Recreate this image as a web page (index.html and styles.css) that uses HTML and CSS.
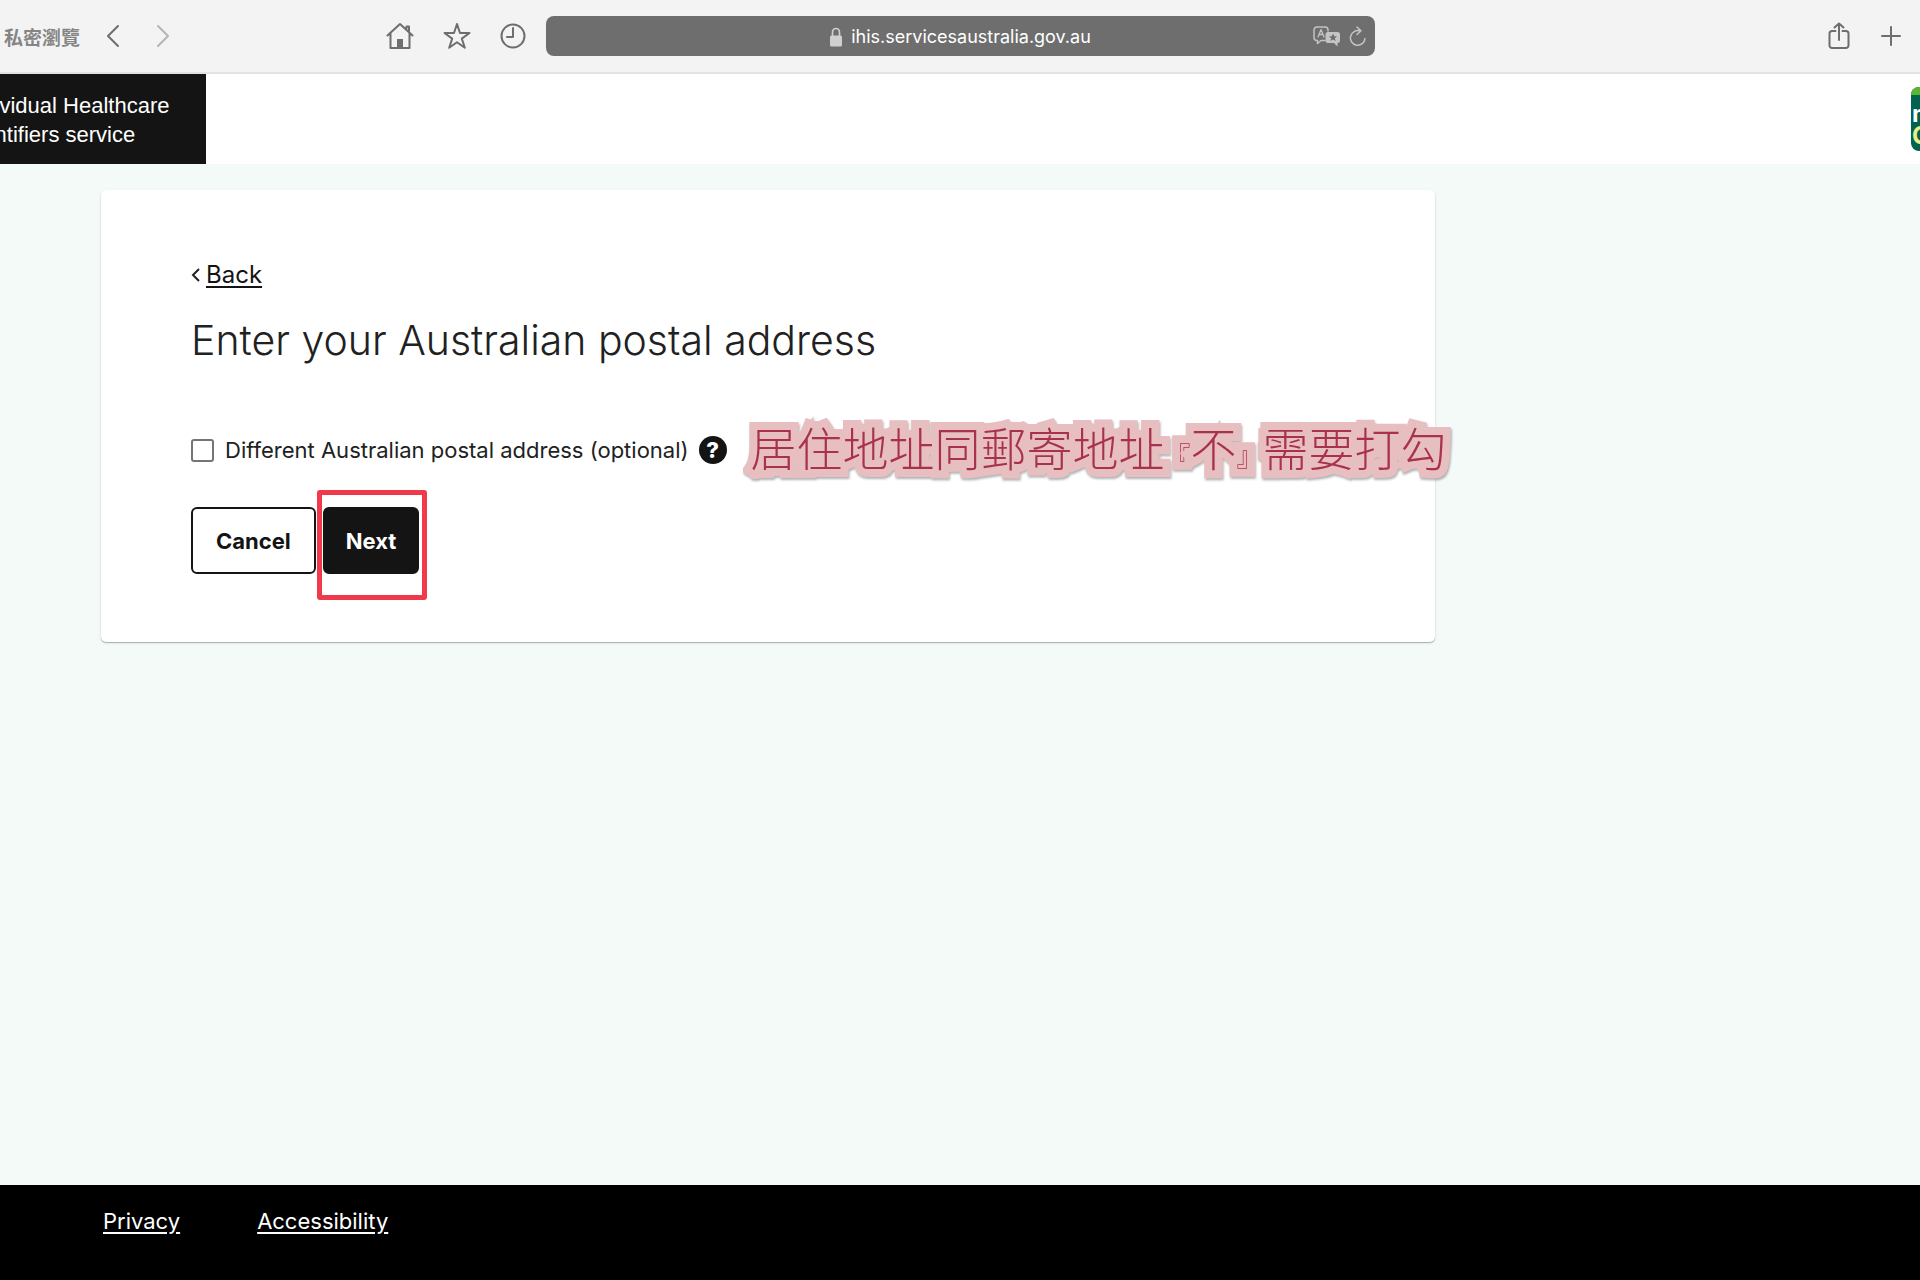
FILE: index.html
```
<!DOCTYPE html>
<html lang="en">
<head>
  <meta charset="UTF-8">
  <title>Individual Healthcare Identifiers service</title>
  <link rel="stylesheet" href="styles.css">
</head>
<body>
  <div class="toolbar">
    <div class="toolbar-left">
      <span class="private-label" lang="zh-Hant">私密瀏覽</span>
      <button class="tool nav-back" type="button" aria-label="Go back">
        <svg width="14" height="24" viewBox="0 0 14 24"><path d="M12 2 2 12l10 10"/></svg>
      </button>
      <button class="tool nav-forward" type="button" aria-label="Go forward">
        <svg width="14" height="24" viewBox="0 0 14 24"><path d="m2 2 10 10L2 22"/></svg>
      </button>
      <div class="tool-group">
        <button class="tool" type="button" aria-label="Home">
          <svg width="28" height="28" viewBox="0 0 28 28"><path d="M1.500 13.500 14 2l12.500 11.500M4.500 11.500V26h19V11.500M20.500 8V4.500H23V10.500"/><path class="solid" d="M11 17h6v9h-6z"/></svg>
        </button>
        <button class="tool" type="button" aria-label="Bookmarks">
          <svg width="28" height="28" viewBox="0 0 28 28"><path d="m14 2 3 9h9.500l-7.700 5.600 3 9.200L14 20.200l-7.800 5.600 3-9.200L1.500 11H11z"/></svg>
        </button>
        <button class="tool" type="button" aria-label="History">
          <svg width="26" height="26" viewBox="0 0 26 26"><circle cx="13" cy="13" r="11.500"/><path d="M13 5v9H7"/></svg>
        </button>
      </div>
    </div>
    <div class="address-bar">
      <svg class="lock" width="14" height="20" viewBox="0 0 14 20"><rect x="1" y="8.500" width="12" height="11" rx="1.500" fill="#d0d0d0"/><path d="M3.500 9V5.500a3.500 4 0 0 1 7 0V9" fill="none" stroke="#d0d0d0" stroke-width="1.700"/></svg>
      <span>ihis.servicesaustralia.gov.au</span>
      <div class="address-tools">
        <button class="tool" type="button" aria-label="Translate">
          <svg width="28" height="21" viewBox="0 0 28 21"><path d="M12 14.500H8L4.500 17.500v-3H4a3 3 0 0 1-3-3V4a3 3 0 0 1 3-3h8a3 3 0 0 1 3 3v1"/><path d="m5 11 3-7.500L11 11M6 8.500h4" stroke-width="1.300"/><path class="solid" d="M15 6h9.500a2.500 2.500 0 0 1 2.500 2.500v6a2.500 2.500 0 0 1-2.500 2.500v3.500L21 17h-6a2.500 2.500 0 0 1-2.500-2.500v-6A2.500 2.500 0 0 1 15 6z"/><path class="cut" d="m20 7.500 1.200 2.700 2.900.2-2.300 1.800.9 2.800-2.700-1.600-2.700 1.600.9-2.800-2.300-1.800 2.900-.2z"/></svg>
        </button>
        <button class="tool" type="button" aria-label="Reload">
          <svg width="18" height="21" viewBox="0 0 18 21"><path d="M9 4.500h2.500M11 5a7.300 7.300 0 1 0 5 7.500M8 1l4 3.800-4 3.700"/></svg>
        </button>
      </div>
    </div>
    <div class="toolbar-right">
      <button class="tool" type="button" aria-label="Share">
        <svg width="22" height="28" viewBox="0 0 22 28"><path d="M7.500 9H4a2.500 2.500 0 0 0-2.500 2.500v12A2.500 2.500 0 0 0 4 26h14a2.500 2.500 0 0 0 2.500-2.500v-12A2.500 2.500 0 0 0 18 9h-3.500M11 18V1.500M6.500 5.500 11 1.500l4.500 4"/></svg>
      </button>
      <button class="tool" type="button" aria-label="New tab">
        <svg width="20" height="20" viewBox="0 0 20 20"><path d="M10 1v18M1 10h18"/></svg>
      </button>
    </div>
  </div>

  <header class="site-header">
    <div class="service-name">Individual Healthcare<br>Identifiers service</div>
    <svg class="mygov" width="76" height="64" viewBox="0 0 76 64" role="img" aria-label="myGov">
      <clipPath id="badge"><rect width="76" height="64" rx="8"/></clipPath>
      <g clip-path="url(#badge)">
        <rect width="76" height="64" fill="#00634f"/>
        <rect width="76" height="8" fill="#5cb531"/>
        <text x="1" y="35" fill="#fff">my</text>
        <text x="1" y="57" fill="#e8ee8a">Gov</text>
      </g>
    </svg>
  </header>

  <main class="page">
    <form class="card">
      <div class="back">
        <svg width="10" height="14" viewBox="0 0 10 14"><path d="M8 1 2 7l6 6"/></svg>
        <a href="#">Back</a>
      </div>
      <h1>Enter your Australian postal address</h1>

      <div class="option">
        <input type="checkbox" id="different-address">
        <label for="different-address">Different Australian postal address (optional)</label>
        <button class="help" type="button" aria-label="Help">?</button>
        <span class="note" lang="zh-Hant">居住地址同郵寄地址<small>『</small>不<small>』</small>需要打勾</span>
      </div>

      <div class="actions">
        <button class="btn" type="button">Cancel</button>
        <div class="marked">
          <button class="btn btn-primary" type="submit">Next</button>
        </div>
      </div>
    </form>
  </main>

  <footer class="site-footer">
    <a href="#">Privacy</a>
    <a href="#">Accessibility</a>
  </footer>
</body>
</html>
```

FILE: styles.css
```
* {
  box-sizing: border-box;
}

body {
  margin: 0;
  min-height: 100vh;
  display: flex;
  flex-direction: column;
  background: #f4faf8;
  color: #212121;
  font-family: Inter, "Noto Sans CJK TC", sans-serif;
  overflow-x: hidden;
}

button {
  font-family: inherit;
  cursor: pointer;
}

/* browser toolbar */
.toolbar {
  display: grid;
  grid-template-columns: 1fr minmax(300px, 829px) 1fr;
  align-items: center;
  height: 74px;
  background: #f3f3f3;
  border-bottom: 2px solid #e3e3e3;
}

.toolbar-left {
  display: flex;
  align-items: center;
  padding: 0 20px 0 4px;
}

.private-label {
  font-size: 19px;
  font-weight: 700;
  color: #858585;
  white-space: nowrap;
}

.tool {
  display: flex;
  flex: none;
  padding: 0;
  border: 0;
  background: none;
}

.tool svg {
  fill: none;
  stroke: #6e6e6e;
  stroke-width: 2;
  stroke-linecap: round;
  stroke-linejoin: round;
}

.tool .solid {
  fill: #6e6e6e;
  stroke: none;
}

.nav-back {
  margin-left: 26px;
}

.nav-forward {
  margin-left: 36px;
}

.nav-forward svg {
  stroke: #b5b5b5;
}

.tool-group {
  display: flex;
  align-items: center;
  gap: 29px;
  margin-left: auto;
}

.address-bar {
  position: relative;
  display: flex;
  align-items: center;
  justify-content: center;
  gap: 8px;
  height: 40px;
  padding-top: 1px;
  border-radius: 8px;
  background: #6e6e6e;
  color: #fff;
  font-size: 18px;
}

.address-tools {
  position: absolute;
  right: 8px;
  display: flex;
  gap: 8px;
}

.address-tools .tool svg {
  stroke: #c4c4c4;
  stroke-width: 1.5;
}

.address-tools .solid {
  fill: #c4c4c4;
}

.address-tools .cut {
  fill: #6e6e6e;
  stroke: none;
}

.toolbar-right {
  display: flex;
  align-items: center;
  justify-content: flex-end;
  gap: 31px;
  padding-right: 19px;
}

/* service header */
.site-header {
  display: flex;
  justify-content: space-between;
  height: 90px;
  background: #fff;
  overflow: hidden;
}

.service-name {
  width: 242px;
  margin-left: -36px;
  padding-top: 17px;
  background: #141414;
  color: #fff;
  font: 22px/29px "Liberation Sans", Arial, sans-serif;
}

.mygov {
  flex: none;
  margin: 13px -67px 0 0;
  font: 700 24px Inter, sans-serif;
}

/* main card */
.page {
  flex: 1;
  padding: 26px 101px;
}

.card {
  max-width: 1334px;
  padding: 68px 90px;
  background: #fff;
  border-radius: 5px;
  box-shadow: 0 1px 3px rgba(0, 0, 0, 0.1), 0 1px 1px rgba(0, 0, 0, 0.25);
}

.back {
  display: flex;
  align-items: center;
  gap: 5px;
  font-size: 24px;
  line-height: 34px;
}

.back svg {
  fill: none;
  stroke: #212121;
  stroke-width: 2;
}

.back a {
  color: #141414;
  text-underline-offset: 3px;
}

h1 {
  margin: 18px 0 0;
  font-size: 41px;
  font-weight: 300;
  line-height: 60px;
}

.option {
  display: flex;
  align-items: center;
  height: 60px;
  margin-top: 50px;
  font-size: 22px;
  white-space: nowrap;
}

.option input {
  appearance: none;
  flex: none;
  width: 23px;
  height: 23px;
  margin: 0 11px 0 0;
  border: 2px solid #757575;
  border-radius: 3px;
  background: #fff;
}

.option input:checked {
  background: #141414;
}

.help {
  flex: none;
  width: 28px;
  height: 28px;
  margin-left: 10px;
  padding: 0;
  border: 0;
  border-radius: 50%;
  background: #141414;
  color: #fff;
  font-size: 22px;
  font-weight: 800;
  line-height: 28px;
}

/* handwritten-style sticker note, runs past the card edge */
.note {
  flex: none;
  margin-left: 24px;
  color: #a8324c;
  font-family: "Noto Sans CJK TC", sans-serif;
  font-size: 46px;
  font-weight: 300;
  line-height: 60px;
  -webkit-text-stroke: 16px #e8bfc1;
  paint-order: stroke fill;
  stroke-linejoin: round;
  filter: drop-shadow(1px 2px 1px rgba(0, 0, 0, 0.3));
}

.note small {
  font-size: 26px;
}

.actions {
  display: flex;
  gap: 7px;
  margin-top: 27px;
}

.btn {
  height: 67px;
  padding: 0 23px;
  border: 2px solid #141414;
  border-radius: 6px;
  background: #fff;
  color: #141414;
  font-size: 22px;
  font-weight: 700;
}

.btn-primary {
  padding: 0 21px;
  background: #141414;
  color: #fff;
}

.marked {
  position: relative;
}

/* red frame around the button to press */
.marked::after {
  content: "";
  position: absolute;
  inset: -17px -8px -26px -6px;
  border: 5px solid #f03a4b;
  border-radius: 3px;
  pointer-events: none;
}

/* footer */
.site-footer {
  display: flex;
  gap: 77px;
  height: 95px;
  padding: 21px 103px;
  background: #000;
  font-size: 22px;
  line-height: 30px;
}

.site-footer a {
  color: #fff;
  text-underline-offset: 3px;
}
```
